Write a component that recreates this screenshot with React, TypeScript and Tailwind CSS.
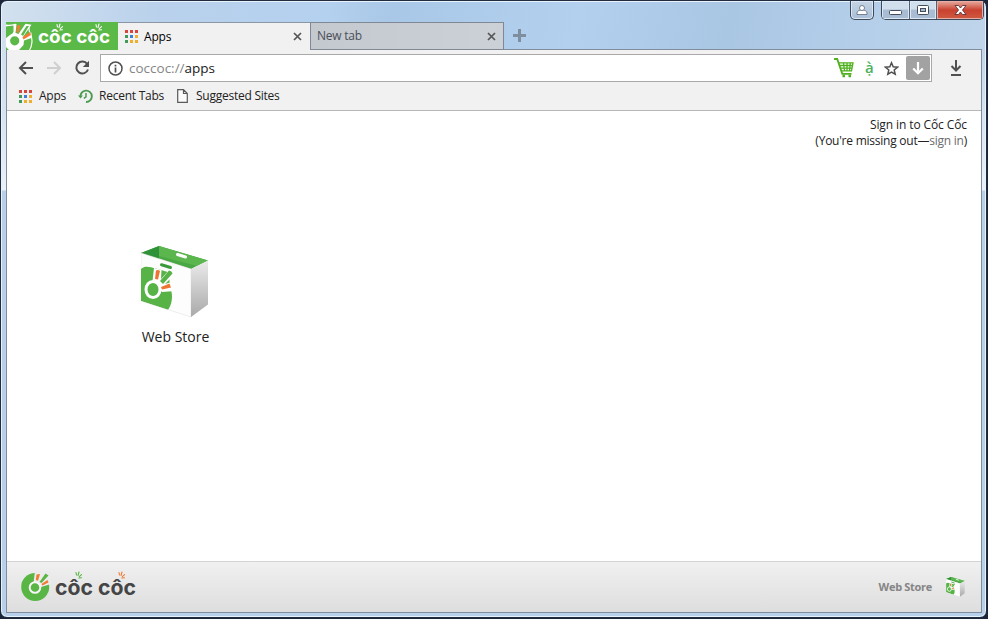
import { clsx } from 'clsx'

const GRID_COLORS = [
  '#d8453c', '#d8453c', '#d8453c',
  '#3f9b57', '#3b7fdb', '#eeb02c',
  '#3f9b57', '#eeb02c', '#eeb02c',
]

function AppsGrid({ className }: { className?: string }) {
  return (
    <svg viewBox="0 0 13 13" className={clsx('h-[13px] w-[13px] shrink-0', className)} shapeRendering="crispEdges">
      {GRID_COLORS.map((color, i) => (
        <rect key={i} x={(i % 3) * 5} y={Math.floor(i / 3) * 5} width="3" height="3" fill={color} />
      ))}
    </svg>
  )
}

function CloseIcon() {
  return (
    <svg viewBox="0 0 9 9" className="h-[9px] w-[9px]" stroke="#555" strokeWidth="1.7">
      <path d="M1 1l7 7M8 1L1 8" />
    </svg>
  )
}

function PersonIcon() {
  return (
    <svg viewBox="0 0 12 10" className="h-[10px] w-[12px]" fill="#fff" stroke="#5d6878" strokeWidth="0.8">
      <path d="M1 9.5V8c0-2 2-2.5 3.5-2.8h3C9 5.500 11 6 11 8v1.500z" />
      <circle cx="6" cy="3" r="2.500" />
    </svg>
  )
}

// Leaf-like strokes that stand over each "ô" of the wordmark
function Sprout({ x, y, color }: { x: number; y: number; color: string }) {
  return (
    <g transform={`translate(${x} ${y})`} stroke={color} strokeWidth="1.100" strokeLinecap="round" fill="none">
      <path d="M0.500 3L0 0.500M2 3.500L3 0M3.300 4.600L5.500 2.600M2.800 6L5.500 5.800" />
    </g>
  )
}

function BrandButton() {
  return (
    <button type="button" aria-label="Cốc Cốc" className="h-7 w-28 shrink-0 bg-[#5bb947]">
      <svg viewBox="0 0 112 28" className="h-7 w-28">
        <path d="M0 2.500Q5 3 9 1.800L10.500 2L9.500 11L12.500 12L19.500 1.800L25.500 2.800L17 15L25.500 10.500V16L18 18.500L17.500 23L13 28H3L0 25V16L7 11V4L0 5Z" fill="#fff" />
        <path d="M23.500 3Q22 8 24.500 12Q26.500 17 25.800 21Q25.500 25 23.500 28" fill="none" stroke="#fff" strokeWidth="1.200" />
        <circle cx="8.700" cy="18.800" r="6" fill="#5bb947" stroke="#fff" strokeWidth="2.800" />
        <path d="M0 4.500L7.500 3.500L7.500 10Q3 11 0 15Z" fill="#5bb947" />
        <path d="M10.500 10L11 3.500L14.500 3L12.500 11Z" fill="#f37b32" />
        <path d="M16.500 15L24 10L25 13L17.500 17.500Z" fill="#f37b32" />
        <path d="M15 12.500L20.500 4L23 4L17 14Z" fill="#5bb947" />
        <text
          x="32"
          y="20.500"
          textLength="72"
          lengthAdjust="spacingAndGlyphs"
          fill="#fff"
          fontSize="18.500"
          fontWeight="700"
          fontFamily="Inter, sans-serif"
        >
          côc côc
        </text>
        <Sprout x={51} y={2} color="#fff" />
        <Sprout x={90} y={2} color="#fff" />
      </svg>
    </button>
  )
}

function StoreBag({ className }: { className: string }) {
  return (
    <svg viewBox="0 0 68 72" className={className}>
      <defs>
        <linearGradient id="bagSide" x1="0" y1="0" x2="0" y2="1">
          <stop offset="0" stopColor="#ebebeb" />
          <stop offset="1" stopColor="#a9a9a9" />
        </linearGradient>
        <clipPath id="bagFront">
          <path d="M0 7L50 23V71L0 55Z" />
        </clipPath>
      </defs>
      <path d="M0 7L18 0L67 14.500L50 23Z" fill="#49a844" />
      <path d="M0 7L18 0V13Z" fill="#2f9238" />
      <path d="M18 0L67 14.500L56 20L18 10Z" fill="#5ab64d" />
      <path d="M36.500 8.500L44.500 11" stroke="#fff" strokeWidth="3" strokeLinecap="round" />
      <path d="M0 7L50 23V71L0 55Z" fill="#fdfdfd" stroke="#ddd" strokeWidth=".5" />
      <path d="M50 23L67 14.500V58.500L50 71Z" fill="url(#bagSide)" />
      <g clipPath="url(#bagFront)">
        <path d="M0 23C4 19 9 21 15 22.500L30 27C26 37 31 42 31 50C31 57 29 61 27 64L0 55Z" fill="#58b347" />
        <path d="M11.500 35L13 22L20.500 24L20 33L29 23L36 26L24 38L34 35V45L21 46Z" fill="#fff" />
        <ellipse cx="12" cy="43.500" rx="7" ry="8" fill="#58b347" stroke="#fff" strokeWidth="3" />
        <path d="M14 33L15 24.500Q17 23.500 19 25L17 33.500Z" fill="#ee7433" />
        <path d="M19 35L28 24.500Q31 25 31.500 27.500L22 38Z" fill="#58b347" />
        <path d="M20 41L28.500 37.500L30 41.500L21 43.500Z" fill="#ee7433" />
      </g>
      <path d="M20.500 18.700L29.500 21.500" stroke="#3a9a3c" strokeWidth="3" strokeLinecap="round" />
    </svg>
  )
}

function FooterLogo() {
  return (
    <svg viewBox="0 0 118 32" className="h-8 w-[118px]" role="img" aria-label="Cốc Cốc">
      <circle cx="14.200" cy="16" r="14" fill="#59b544" />
      <path d="M12.500 12L14 0L30 0V13L20 16Z" fill="#ebebeb" />
      <circle cx="14" cy="16.500" r="5.300" fill="#59b544" stroke="#f6f6f6" strokeWidth="2" />
      <path d="M14.800 9L15.500 3.500L19 3L17 9.700Z" fill="#f07b32" />
      <path d="M18.500 11L24.500 2.500L27.500 4.500L20.500 12Z" fill="#59b544" />
      <path d="M20.500 13L26.500 9L27.500 11.500L21.500 14.500Z" fill="#f07b32" />
      <text
        x="34"
        y="24"
        textLength="81"
        lengthAdjust="spacingAndGlyphs"
        fill="#454545"
        fontSize="20.500"
        fontWeight="700"
        fontFamily="Inter, sans-serif"
      >
        côc côc
      </text>
      <Sprout x={55} y={1} color="#59b544" />
      <Sprout x={98} y={1} color="#f07b32" />
    </svg>
  )
}

function WindowControls() {
  return (
    <div className="flex items-start">
      <button
        type="button"
        className="mr-[7px] flex h-[19px] w-6 items-center justify-center rounded-b-[5px] border border-t-0 border-[#3d4858] bg-linear-to-b from-[#c5d4e5] to-[#a8bfd8] shadow-[inset_0_0_0_1px_#dce8f4]"
      >
        <PersonIcon />
      </button>
      <div className="flex h-[19px] overflow-hidden rounded-b-[5px] border border-t-0 border-[#3d4858]">
        <button
          type="button"
          className="flex w-7 items-center justify-center border-r border-[#536176] bg-linear-to-b from-[#d1deec] from-45% to-[#a8bdd3] to-50% shadow-[inset_0_0_0_1px_#dce8f4]"
        >
          <svg viewBox="0 0 13 5" className="mt-1 h-[5px] w-[13px]">
            <rect x=".5" y=".5" width="12" height="4" rx="1" fill="#fff" stroke="#454d5c" />
          </svg>
        </button>
        <button
          type="button"
          className="flex w-[27px] items-center justify-center border-r border-[#536176] bg-linear-to-b from-[#d1deec] from-45% to-[#a8bdd3] to-50% shadow-[inset_0_0_0_1px_#dce8f4]"
        >
          <svg viewBox="0 0 12 10" className="h-[10px] w-3" fill="#fff" stroke="#454d5c">
            <rect x=".5" y=".5" width="11" height="9" rx="1" />
            <rect x="3.500" y="3.500" width="5" height="3" fill="#a9bace" />
          </svg>
        </button>
        <button
          type="button"
          className="flex w-[46px] items-center justify-center bg-linear-to-b from-[#e3a195] from-5% via-[#c9402f] via-50% to-[#cf5a42] shadow-[inset_0_0_0_1px_#e9ada3]"
        >
          <svg viewBox="0 0 13 10" className="h-[10px] w-[13px]">
            <path d="M1 .5h3.500l2 2.500 2-2.500H12L8.500 5l3.500 4.500H8.500l-2-2.500-2 2.500H1L4.500 5z" fill="#fff" stroke="#5c3138" strokeWidth=".9" />
          </svg>
        </button>
      </div>
    </div>
  )
}

function TabStrip() {
  return (
    <div className="flex h-7">
      <BrandButton />
      <div className="flex w-[192px] items-center border-t border-[#8c97a5] bg-[#f1f1f1] pr-[8px] pl-[7px]">
        <AppsGrid />
        <span className="ml-[6px] flex-1 tracking-[-0.2px]">Apps</span>
        <CloseIcon />
      </div>
      <div className="flex w-[194px] items-center border border-[#7f8893] bg-linear-to-r from-[#c4c9d0] to-[#ccd1d8] pr-[7px] pl-[6px] text-[#4a4f57]">
        <span className="flex-1 tracking-[-0.25px]">New tab</span>
        <CloseIcon />
      </div>
      <div className="flex flex-1 items-center border-b border-[#7f8d9e] pl-[9px]">
        <svg viewBox="0 0 13 13" className="h-[13px] w-[13px]">
          <path d="M6.500 0v13M0 6.500h13" stroke="#7f8e9f" strokeWidth="3" />
        </svg>
      </div>
    </div>
  )
}

function Toolbar() {
  return (
    <div className="flex h-9 items-center pl-[11px] text-[#555]">
      <svg viewBox="0 0 16 14" className="h-[14px] w-4" fill="none" stroke="#505050" strokeWidth="2">
        <path d="M15 7H2M8 1L2 7l6 6" />
      </svg>
      <svg viewBox="0 0 16 14" className="ml-3 h-[14px] w-4" fill="none" stroke="#cfcfcf" strokeWidth="2">
        <path d="M1 7h13M8 1l6 6-6 6" />
      </svg>
      <svg viewBox="0 0 16 16" className="ml-[12px] h-4 w-4" fill="none" stroke="#505050" strokeWidth="2">
        <path d="M13.200 4A6 6 0 1 0 14 9.500" />
        <path d="M15 .8V7H8.800z" fill="#505050" stroke="none" />
      </svg>
      <div className="ml-[10px] flex h-7 w-[832px] items-center border border-[#a9a9a9] bg-white pr-px pl-[7px]">
        <svg viewBox="0 0 15 15" className="h-[15px] w-[15px]" fill="none" stroke="#505050">
          <circle cx="7.500" cy="7.500" r="6.500" strokeWidth="1.500" />
          <path d="M7.500 6.500V11.500M7.500 3.700v1.700" strokeWidth="1.700" />
        </svg>
        <span className="ml-[6px] flex-1 text-[13.5px] text-[#202020]">
          <span className="text-[#858585]">coccoc://</span>apps
        </span>
        <svg viewBox="0 0 20 20" className="h-5 w-5" fill="none" stroke="#4eb01c" strokeWidth="1.300">
          <path d="M0 1h3.200L8.300 15.800H17.500" strokeWidth="1.800" />
          <path d="M4.800 4.800H19l-1.500 8H7.500M5.500 7.500h13M6.300 10.200h12M9.500 5l1 8M13 5v8M16.300 5l-.8 8" />
          <path d="M8.500 18h2.500M14.500 18H17" strokeWidth="2.400" />
        </svg>
        <span className="ml-[11px] w-[9px] pb-[2px] text-[15px] leading-none font-semibold text-[#4db05c]">ạ̀</span>
        <svg viewBox="0 0 15 15" className="ml-[10px] h-[15px] w-[15px]" fill="none" stroke="#505050" strokeWidth="1.500">
          <path d="M7.500 1.800l1.700 4 4.300.4-3.300 2.800 1 4.200-3.700-2.200-3.700 2.200 1-4.200L1.500 6.200l4.300-.4z" />
        </svg>
        <span className="ml-[7px] flex h-6 w-6 items-center justify-center rounded-[2px] bg-[#a2a2a2]">
          <svg viewBox="0 0 12 14" className="h-[14px] w-3" fill="none" stroke="#fff" strokeWidth="2.200">
            <path d="M6 1v11M1.200 7.500L6 12.200l4.800-4.700" />
          </svg>
        </span>
      </div>
      <svg viewBox="0 0 12 16" className="ml-[18px] h-4 w-3" fill="none" stroke="#505050" strokeWidth="2">
        <path d="M6 0v10M1.500 6L6 10.500 10.500 6M1 15h10" />
      </svg>
    </div>
  )
}

const BOOKMARKS = [
  { label: 'Apps', icon: <AppsGrid className="mr-[7px]" />, className: 'w-[59px]' },
  {
    label: 'Recent Tabs',
    icon: (
      <svg viewBox="0 0 15 14" className="mr-[6px] h-[14px] w-[15px] shrink-0" fill="none" stroke="#4c9b51" strokeWidth="1.900">
        <path d="M2.500 8A5.700 5.700 0 1 1 8 13" />
        <path d="M0 6.500h5L2.500 9.500z" fill="#4c9b51" stroke="none" />
        <path d="M8 4v3.800l-2.200 1.500" strokeWidth="1.500" />
      </svg>
    ),
    className: 'w-[99px]',
  },
  {
    label: 'Suggested Sites',
    icon: (
      <svg viewBox="0 0 11 14" className="mr-[8px] h-[14px] w-[11px] shrink-0" fill="#fafafa" stroke="#5a5a5a" strokeWidth="1.200">
        <path d="M.7.700H6.500L10.300 4.500V13.300H.7zM6.500.7V4.500H10.300" />
      </svg>
    ),
    className: '',
  },
]

function BookmarkBar() {
  return (
    <div className="flex h-[25px] items-center border-b border-[#b8b8b8] pb-[4px] pl-3 tracking-[-0.25px] text-[#222]">
      {BOOKMARKS.map(({ label, icon, className }) => (
        <button key={label} type="button" className={clsx('flex items-center whitespace-nowrap', className)}>
          {icon}
          {label}
        </button>
      ))}
    </div>
  )
}

export default function App() {
  return (
    <div className="h-[619px] w-[988px] overflow-hidden bg-[#1b2639] font-['Open_Sans','Noto_Sans',sans-serif] text-[12px]">
      <div className="flex h-[618px] w-[987px] flex-col rounded-[7px] border border-[#222c40] bg-[linear-gradient(to_bottom,transparent_0,transparent_50px,#d6e3f1_110px,#eaf1f8_189px,#b9d0eb_190px,#b9d0eb_100%),linear-gradient(100deg,#d3e1ee_0,#b9d1ec_15%,#b4d1ef_30%,#a9c7e6_36%,#b3d1ef_53%,#a9c6e3_67%,#b5cfea_80%,#c8d9e9_100%)] pr-[4px] pb-[4px] pl-[5px] shadow-[inset_0_0_0_1px_#e8f2fb]">
        <header className="-mr-[2px] flex h-[21px] shrink-0 justify-end">
          <WindowControls />
        </header>
        <TabStrip />
        <div className="flex min-h-0 flex-1 flex-col border-x border-b border-[#7f8d9e] bg-[#f1f1f1]">
          <Toolbar />
          <BookmarkBar />
          <main className="flex flex-1 flex-col bg-white">
            <div className="pt-[6px] pr-[14px] text-right leading-4 tracking-[-0.24px] text-[#222]">
              <p className="tracking-[-0.1px]">Sign in to Cốc Cốc</p>
              <p>
                (You&apos;re missing out—<a className="text-[#6c6c6c]">sign in</a>)
              </p>
            </div>
            <div className="mt-[97px] ml-[108px] flex w-[120px] flex-col items-center">
              <StoreBag className="h-[72px] w-[68px]" />
              <span className="mt-[9px] pl-px text-[14px] leading-5 text-[#222]">Web Store</span>
            </div>
          </main>
          <footer className="flex h-[51px] items-center justify-between border-t border-[#d4d4d4] bg-linear-to-b from-[#f0f0f0] to-[#dedede] pr-[16px] pl-[14px]">
            <FooterLogo />
            <div className="flex items-center gap-[14px] text-[11px] font-bold tracking-[-0.3px] text-[#858585]">
              Web Store
              <StoreBag className="h-5 w-[19px]" />
            </div>
          </footer>
        </div>
      </div>
    </div>
  )
}
